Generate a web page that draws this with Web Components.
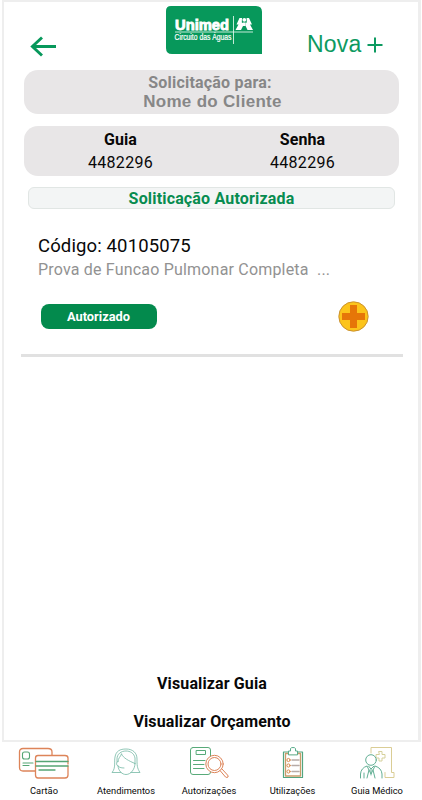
<!DOCTYPE html>
<html lang="pt-BR">
<head>
<meta charset="utf-8">
<title>Guia autorizada</title>
<style>
html,body{margin:0;background:#fff}
body{font-family:Roboto,"Liberation Sans",sans-serif;color:#080808}
</style>
</head>
<body>
<app-screen></app-screen>
<script>
function define(name, html) {
  const template = document.createElement('template');
  template.innerHTML = html;
  customElements.define(name, class extends HTMLElement {
    constructor() {
      super();
      this.attachShadow({ mode: 'open' }).append(template.content.cloneNode(true));
    }
  });
}

define('unimed-logo', `
<style>
:host{display:block;width:96px;height:49px}
svg{display:block}
</style>
<svg width="96" height="49" viewBox="0 0 96 49">
<path d="M5 0H90Q96 0 96 6V48H6Q0 48 0 42V5Q0 0 5 0Z" fill="#07985b"/>
<text x="9" y="23.800" textLength="54" lengthAdjust="spacingAndGlyphs" font-family="Liberation Sans" font-weight="700" font-size="15" fill="#fff" stroke="#fff" stroke-width=".9">Unimed</text>
<text x="8.500" y="34" textLength="57" lengthAdjust="spacingAndGlyphs" font-family="Liberation Sans" font-size="8.200" fill="#fff" stroke="#fff" stroke-width=".2">Circuito das Águas</text>
<path d="M9 26H87M67.500 10V38" stroke="#d9f3e5" stroke-width=".9"/>
<g fill="#fff"><circle cx="78.300" cy="13.800" r="1.900"/>
<path d="M73.500 12H76L75.800 16.500L77 17V20L75 24H69.500L72.500 18.500H70.500Z"/>
<path d="M80.600 12H83L86 18.500H84L87 24H81.500L79.600 20V17L80.800 16.500Z"/>
<path d="M77 16.500H79.600V20H77Z"/></g>
</svg>`);

define('back-arrow', `
<style>:host{display:block;width:27px;height:21px}svg{display:block}</style>
<svg width="27" height="21" viewBox="0 0 27 21"><path d="M26 10.500H2.400M12 1.500L2.400 10.500L12 19.500" fill="none" stroke="#07985b" stroke-width="2.900"/></svg>`);

define('new-button', `
<style>
:host{display:flex;align-items:center;color:#0d9a60;font:23px/28px "Liberation Sans",Arial,sans-serif}
span{letter-spacing:.2px}
svg{display:block;margin:1px 0 0 5px}
</style>
<span><slot></slot></span>
<svg width="16" height="16" viewBox="0 0 16 16"><path d="M8 .5V15.500M.5 8H15.500" stroke="#0d9a60" stroke-width="2"/></svg>`);

define('app-header', `
<style>
:host{display:grid;grid-template-columns:136px 1fr 111px;height:63.500px;align-items:start}
back-arrow{margin:30px 0 0 26px}
unimed-logo{margin:-.5px 0 0 26px}
new-button{margin:24px 0 0}
</style>
<back-arrow></back-arrow><unimed-logo></unimed-logo><new-button>Nova</new-button>`);

define('client-card', `
<style>
:host{display:flex;flex-direction:column;align-items:center;box-sizing:border-box;height:44.500px;padding-top:3px;border-radius:14px;background:#e8e6e7;color:#878787;font-weight:700}
.l{font-size:16px;line-height:19px;letter-spacing:.2px;margin-right:3px}
.n{font:700 17px/19px "Liberation Sans",Arial,sans-serif;letter-spacing:.3px;margin-left:2px}
</style>
<div class="l"><slot name="label"></slot></div><div class="n"><slot></slot></div>`);

define('info-pair', `
<style>
:host{display:block;text-align:center}
b{display:block;font-size:16px;line-height:23px;letter-spacing:.1px}
span{display:block;font-size:16px;line-height:24px;letter-spacing:.3px}
</style>
<b><slot name="label"></slot></b><span><slot></slot></span>`);

define('info-card', `
<style>
:host{display:grid;grid-template-columns:182px 182px;justify-content:center;box-sizing:border-box;height:50px;padding-top:2px;border-radius:14px;background:#e8e6e7}
</style>
<slot></slot>`);

define('status-bar', `
<style>
:host{display:block;box-sizing:border-box;height:22px;border:1px solid #e1e6e4;border-radius:6px;background:#f3f5f5;color:#078c50;text-align:center;font:700 16px/21px Roboto,sans-serif;letter-spacing:.17px}
</style>
<slot></slot>`);

define('add-icon', `
<style>:host{display:block;width:31px;height:31px}svg{display:block}</style>
<svg width="31" height="31" viewBox="0 0 31 31"><circle cx="15.500" cy="15.500" r="14.700" fill="#fcc41b" stroke="#c58b2c" stroke-width=".9"/><path d="M12 4H19V12H27V19H19V27H12V19H4V12H12Z" fill="#e67608"/></svg>`);

define('procedure-item', `
<style>
:host{display:block;border-bottom:3px solid #e1e1e1;padding:25px 34px 22px 17px}
.code{font-size:18.500px;line-height:24px;letter-spacing:.13px}
.name{font-size:16px;line-height:24px;color:#929292;white-space:pre;letter-spacing:.19px}
.row{display:flex;justify-content:space-between;align-items:center;margin-top:19px;padding-left:2.500px}
.tag{width:116px;height:25px;border-radius:8px;background:#038a4d;color:#fff;text-align:center;font-weight:700;font-size:12.800px;line-height:25px}
</style>
<div class="code"><slot name="code"></slot></div>
<div class="name"><slot></slot></div>
<div class="row"><div class="tag"><slot name="status"></slot></div><add-icon></add-icon></div>`);

define('text-action', `
<style>:host{display:block;text-align:center;font-weight:700;font-size:16px;line-height:20px;letter-spacing:.12px}</style>
<slot></slot>`);

define('tab-item', `
<style>
:host{display:flex;flex-direction:column;align-items:center}
.i{height:38px;display:flex}
.t{font-size:9.300px;line-height:14px;white-space:nowrap}
::slotted(svg){display:block;fill:none;stroke-linecap:round;stroke-linejoin:round}
</style>
<div class="i"><slot name="icon"></slot></div><div class="t"><slot></slot></div>`);

define('tab-bar', `
<style>
:host{display:grid;grid-template-columns:80px 84px 82px 85px 84px;padding:4px 0 0 4px;height:58px;box-sizing:border-box}
</style>
<tab-item>
<svg slot="icon" width="52" height="38" viewBox="0 0 52 38"><g stroke="#dd8459" stroke-width="1.300"><path d="M17 25H5Q1.500 25 1.500 21.500V6Q1.500 2.500 5 2.500H30Q34 2.500 34 6V9"/><path d="M50 18V12Q50 9.500 47 9.500H20Q17.500 9.500 17.500 12V29Q17.500 32 20 32H47Q50 32 50 29V20"/></g><g stroke="#55a574" stroke-width="1.100"><rect x="4.500" y="6" width="7" height="7" rx="2"/><path d="M5 17H15M5 19.500H11"/><path d="M18 15.500H50M18 20H50M21 24H37" stroke-width="1.300"/></g></svg>Cartão</tab-item>
<tab-item>
<svg slot="icon" width="30" height="38" viewBox="0 0 30 38"><g stroke="#75b9a5" stroke-width=".8"><path d="M10 26.500H1C5 22 3 16 4 11C5 5 9 3 15 3C22 3 26 7 26 13C26 19 26 22 29 26.500H20"/><path d="M7 20C7.500 25 11 28.500 15 28.500C20 28.500 24 23 24 17.500"/><path d="M10.500 8C12 12 18 15 24 17.500M10.500 8C9.500 11 7 12 7 15.500"/><path d="M7 15.500C5 15 5 20 7 20M24 17.500V12C23 7 19 5 15 5C10 5 6 8 6 13V16M7 20Q8 22 13 22"/></g></svg>Atendimentos</tab-item>
<tab-item>
<svg slot="icon" width="40" height="38" viewBox="0 0 40 38"><g stroke="#58aa79"><rect x="1.500" y="1.500" width="20" height="27" rx="2.500"/><rect x="7.500" y="4.500" width="9" height="4"/><path d="M4.500 14.500H16M4.500 18.500H15M4.500 22.500H15"/></g><g stroke="#dd8459"><circle cx="25.500" cy="18" r="8.700" fill="#fff"/><circle cx="25.500" cy="18" r="6.500"/><path d="M31 24.500L36.500 31Q38 32 39 31Q39.500 30 38.500 29L33 23"/></g></svg>Autorizações</tab-item>
<tab-item>
<svg slot="icon" width="22" height="38" viewBox="0 0 22 38"><path d="M1.500 6H20.500V31.500H1.500Z" stroke="#51a680" stroke-width="1.200"/><path d="M3.500 7.500H18.500V30H3.500Z" stroke="#c99c69" stroke-width="1.300"/><path d="M6.500 8.500V5H8.500V2.500Q9 1.500 11 1.500Q13 1.500 13.500 2.500V5H15.500V8.500Z" fill="#fff" stroke="#59ad8b"/><g stroke="#d68848"><circle cx="6.500" cy="14" r="1.600"/><circle cx="6.500" cy="19.500" r="1.600"/><circle cx="6.500" cy="25.500" r="1.600"/></g><path d="M10 14H17M10 19.500H17M10 25.500H17" stroke="#b7aba7" stroke-width="1.500"/></svg>Utilizações</tab-item>
<tab-item>
<svg slot="icon" width="36" height="38" viewBox="0 0 36 38"><path d="M12 7V1.500H32.500V26.500H35V31.500H26V26.500" stroke="#dacd95"/><path d="M20 5.500H23V8.500H26V12H23V15H20V12H17V8.500H20Z" stroke="#d5d09b"/><g stroke="#62af94"><circle cx="12" cy="14" r="5.300" fill="#fff"/><path d="M1.500 32V28Q2 22 8 20L12 28L16 20Q22.500 22 23 28V32M9.500 20L12 23L15 20M10 24L8 32M14 24L16 32M12 23V29M5 27V32"/></g></svg>Guia Médico</tab-item>`);

define('app-screen', `
<style>
:host{display:flex;flex-direction:column;width:422px;height:800px;overflow:hidden}
main{box-sizing:border-box;width:419px;margin-left:2px;height:742px;flex:none;border:solid #eee;border-width:2px 3px 2px 2px;padding:4px 0 0;display:flex;flex-direction:column}
client-card,info-card{margin:0 19px 0 20px;flex:none}
info-card{margin-top:12px}
status-bar{margin:11px 23px 0 24px}
procedure-item{margin:0 15px 0 17px}
.actions{display:flex;flex-direction:column;gap:18px;margin-top:auto;padding:0 0 8px 2px}
</style>
<main>
<app-header></app-header>
<client-card><span slot="label">Solicitação para:</span>Nome do Cliente</client-card>
<info-card><info-pair><span slot="label">Guia</span>4482296</info-pair><info-pair><span slot="label">Senha</span>4482296</info-pair></info-card>
<status-bar>Soliticação Autorizada</status-bar>
<procedure-item><span slot="code">Código: 40105075</span>Prova de Funcao Pulmonar Completa  ...<span slot="status">Autorizado</span></procedure-item>
<div class="actions"><text-action>Visualizar Guia</text-action><text-action>Visualizar Orçamento</text-action></div>
</main>
<tab-bar></tab-bar>`);
</script>
</body>
</html>
